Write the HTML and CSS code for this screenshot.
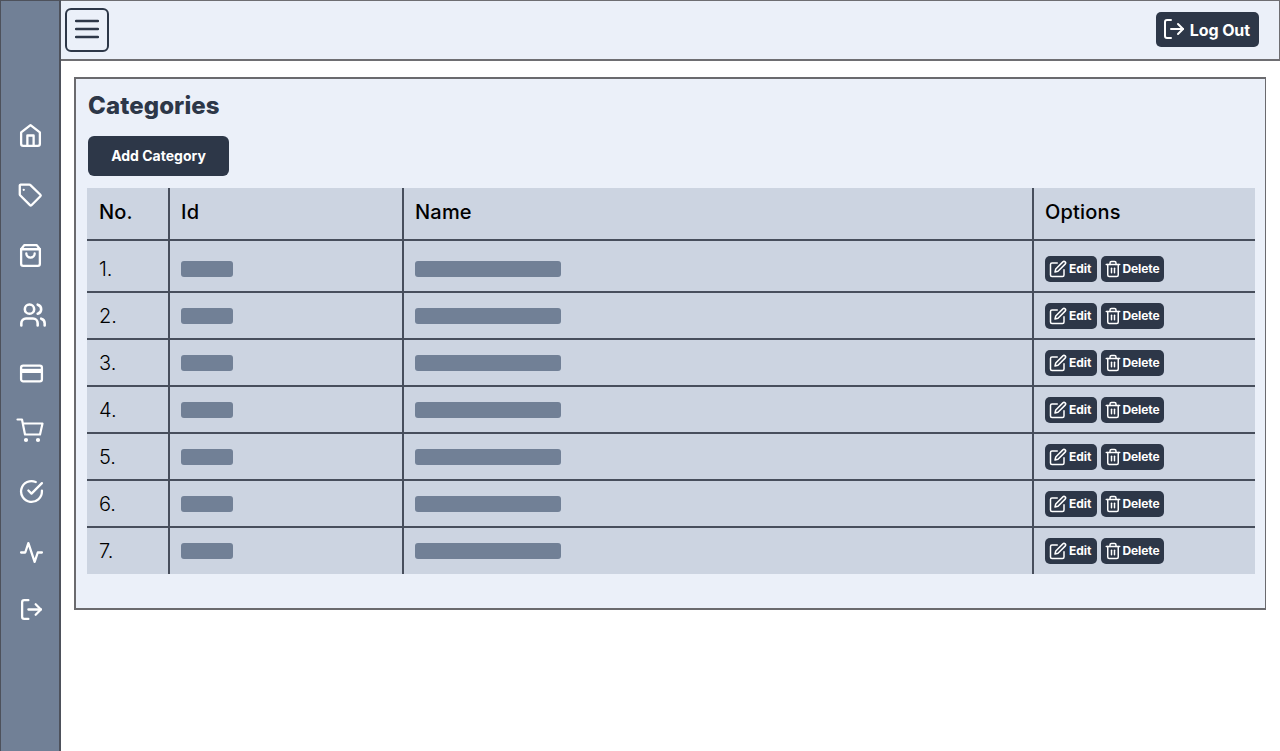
FILE: index.html
```html
<!DOCTYPE html>
<html lang="en">
<head>
    <meta charset="UTF-8">
    <meta name="viewport" content="width=device-width, initial-scale=1.0">
    <title>Categories</title>
    <link rel="stylesheet" href="styles.css">
</head>
<body>
    <svg class="defs" aria-hidden="true">
        <symbol id="i-home" viewBox="0 0 24 24"><path d="m3 9 9-7 9 7v11a2 2 0 0 1-2 2H5a2 2 0 0 1-2-2z"/><polyline points="9 22 9 12 15 12 15 22"/></symbol>
        <symbol id="i-tag" viewBox="0 0 24 24"><path d="M2.5 1.5h8.5a1 1 0 0 1 .7.3l9.8 9.5a1 1 0 0 1 0 1.4l-8.6 8.6a1 1 0 0 1-1.4 0L2 11.7a1 1 0 0 1-.3-.7V2.5a1 1 0 0 1 1-1z"/><path d="M5.5 6.5h.01"/></symbol>
        <symbol id="i-bag" viewBox="0 0 24 24"><path d="M6 2 3 6v14a2 2 0 0 0 2 2h14a2 2 0 0 0 2-2V6l-3-4Z"/><path d="M3 6h18"/><path d="M16 10a4 4 0 0 1-8 0"/></symbol>
        <symbol id="i-users" viewBox="0 0 24 24"><path d="M16 21v-2a4 4 0 0 0-4-4H6a4 4 0 0 0-4 4v2"/><circle cx="9" cy="7" r="4"/><path d="M22 21v-2a4 4 0 0 0-3-3.87"/><path d="M16 3.13a4 4 0 0 1 0 7.75"/></symbol>
        <symbol id="i-card" viewBox="0 0 24 24"><rect x="2" y="4.5" width="20" height="15" rx="2"/><path d="M2 9.5h20" stroke-width="4" stroke-linecap="butt"/></symbol>
        <symbol id="i-cart" viewBox="0 0 28 28"><circle class="dot" cx="10" cy="23" r="1"/><circle class="dot" cx="22" cy="23" r="1"/><path d="M1.5 2.5H6L9 17.5H24L26.5 6.5H7"/></symbol>
        <symbol id="i-check" viewBox="0 0 24 24"><path d="M22 11.08V12a10 10 0 1 1-5.93-9.14"/><polyline points="22 4 12 14.01 9 11.01"/></symbol>
        <symbol id="i-activity" viewBox="0 0 24 24"><path d="M22 12h-4l-3 9L9 3l-3 9H2"/></symbol>
        <symbol id="i-logout" viewBox="0 0 24 24"><path d="M9 21H5a2 2 0 0 1-2-2V5a2 2 0 0 1 2-2h4"/><polyline points="16 17 21 12 16 7"/><line x1="21" y1="12" x2="9" y2="12"/></symbol>
        <symbol id="i-edit" viewBox="0 0 24 24"><path d="M11 4H4a2 2 0 0 0-2 2v14a2 2 0 0 0 2 2h14a2 2 0 0 0 2-2v-7"/><path d="M18.5 2.5a2.121 2.121 0 0 1 3 3L12 15l-4 1 1-4 9.5-9.5z"/></symbol>
        <symbol id="i-trash" viewBox="0 0 24 24"><path d="M3 6h18"/><path d="M19 6v14a2 2 0 0 1-2 2H7a2 2 0 0 1-2-2V6m3 0V4a2 2 0 0 1 2-2h4a2 2 0 0 1 2 2v2"/><line x1="10" y1="11" x2="10" y2="17"/><line x1="14" y1="11" x2="14" y2="17"/></symbol>
    </svg>

    <div class="layout">
        <nav class="sidebar">
            <a class="nav-link"><svg class="nav-icon"><use href="#i-home"/></svg></a>
            <a class="nav-link"><svg class="nav-icon"><use href="#i-tag"/></svg></a>
            <a class="nav-link"><svg class="nav-icon"><use href="#i-bag"/></svg></a>
            <a class="nav-link shift-more"><svg class="nav-icon wide"><use href="#i-users"/></svg></a>
            <a class="nav-link short shift"><svg class="nav-icon"><use href="#i-card"/></svg></a>
            <a class="nav-link shift-left"><svg class="nav-icon wide"><use href="#i-cart"/></svg></a>
            <a class="nav-link shift"><svg class="nav-icon"><use href="#i-check"/></svg></a>
            <a class="nav-link tall shift"><svg class="nav-icon"><use href="#i-activity"/></svg></a>
            <a class="nav-link low shift"><svg class="nav-icon"><use href="#i-logout"/></svg></a>
        </nav>

        <div class="main">
            <header class="topbar">
                <button class="menu-btn">
                    <svg viewBox="0 0 24 24" class="menu-icon"><path d="M1 3h22M1 11h22M1 19h22"/></svg>
                </button>
                <button class="logout-btn"><svg class="logout-icon"><use href="#i-logout"/></svg>Log Out</button>
            </header>

            <section class="card">
                <h1>Categories</h1>
                <button class="add-btn">Add Category</button>
                <table>
                    <thead>
                        <tr><th class="col-no">No.</th><th class="col-id">Id</th><th>Name</th><th class="col-options">Options</th></tr>
                    </thead>
                    <tbody>
                        <tr><td>1.</td><td><div class="ph ph-id"></div></td><td><div class="ph ph-name"></div></td><td><div class="options"><button class="action action-edit"><svg><use href="#i-edit"/></svg>Edit</button><button class="action action-delete"><svg><use href="#i-trash"/></svg>Delete</button></div></td></tr>
                        <tr><td>2.</td><td><div class="ph ph-id"></div></td><td><div class="ph ph-name"></div></td><td><div class="options"><button class="action action-edit"><svg><use href="#i-edit"/></svg>Edit</button><button class="action action-delete"><svg><use href="#i-trash"/></svg>Delete</button></div></td></tr>
                        <tr><td>3.</td><td><div class="ph ph-id"></div></td><td><div class="ph ph-name"></div></td><td><div class="options"><button class="action action-edit"><svg><use href="#i-edit"/></svg>Edit</button><button class="action action-delete"><svg><use href="#i-trash"/></svg>Delete</button></div></td></tr>
                        <tr><td>4.</td><td><div class="ph ph-id"></div></td><td><div class="ph ph-name"></div></td><td><div class="options"><button class="action action-edit"><svg><use href="#i-edit"/></svg>Edit</button><button class="action action-delete"><svg><use href="#i-trash"/></svg>Delete</button></div></td></tr>
                        <tr><td>5.</td><td><div class="ph ph-id"></div></td><td><div class="ph ph-name"></div></td><td><div class="options"><button class="action action-edit"><svg><use href="#i-edit"/></svg>Edit</button><button class="action action-delete"><svg><use href="#i-trash"/></svg>Delete</button></div></td></tr>
                        <tr><td>6.</td><td><div class="ph ph-id"></div></td><td><div class="ph ph-name"></div></td><td><div class="options"><button class="action action-edit"><svg><use href="#i-edit"/></svg>Edit</button><button class="action action-delete"><svg><use href="#i-trash"/></svg>Delete</button></div></td></tr>
                        <tr><td>7.</td><td><div class="ph ph-id"></div></td><td><div class="ph ph-name"></div></td><td><div class="options"><button class="action action-edit"><svg><use href="#i-edit"/></svg>Edit</button><button class="action action-delete"><svg><use href="#i-trash"/></svg>Delete</button></div></td></tr>
                    </tbody>
                </table>
            </section>
        </div>
    </div>
</body>
</html>
```

FILE: styles.css
```css
* {
    box-sizing: border-box;
}
body {
    margin: 0;
    font-family: Inter, "Liberation Sans", sans-serif;
    background-color: #fff;
    overflow: hidden;
}
svg {
    fill: none;
    stroke: currentColor;
    stroke-width: 2;
    stroke-linecap: round;
    stroke-linejoin: round;
}
.defs {
    display: none;
}
.dot {
    fill: currentColor;
}
.layout {
    display: flex;
    height: 100vh;
}

/* sidebar */
.sidebar {
    width: 61px;
    flex-shrink: 0;
    padding: 104px 0 0 1px;
    display: flex;
    flex-direction: column;
    align-items: center;
    background-color: #718096;
    border: 1px solid #4d515b;
    border-width: 1px 2px 0 1px;
    color: #fff;
}
.nav-link {
    display: flex;
    align-items: center;
    justify-content: center;
    flex-shrink: 0;
    height: 60px;
    width: 100%;
}
.nav-link.short {
    height: 56px;
}
.nav-link.tall {
    height: 62px;
}
.nav-link.low {
    height: 52px;
}
.shift {
    padding-left: 2px;
}
.shift-more {
    padding-left: 4px;
}
.shift-left {
    padding-right: 1px;
}
.nav-icon {
    width: 25px;
    height: 25px;
    stroke-width: 2.2;
}
.nav-icon.wide {
    width: 28px;
    height: 28px;
}

/* top bar */
.main {
    flex: 1;
    min-width: 0;
}
.topbar {
    height: 61px;
    display: flex;
    justify-content: space-between;
    align-items: center;
    padding: 0 20px 0 4px;
    background-color: #ebf0f9;
    border: 1px solid #6e6e72;
    border-width: 1px 1px 2px 0;
}
.menu-btn {
    width: 44px;
    height: 44px;
    padding: 0;
    display: flex;
    align-items: center;
    justify-content: center;
    background: transparent;
    border: 2px solid #2d3748;
    border-radius: 6px;
    color: #2d3748;
}
.menu-icon {
    width: 24px;
    height: 24px;
    stroke-width: 2.5;
}
.logout-btn {
    display: flex;
    align-items: center;
    gap: 4px;
    height: 35px;
    margin-bottom: 2px;
    padding: 2px 9px 0 6px;
    background-color: #2d3748;
    color: #fff;
    border: none;
    border-radius: 5px;
    font-family: inherit;
    font-size: 16px;
    font-weight: 700;
    letter-spacing: -0.1px;
}
.logout-icon {
    width: 24px;
    height: 24px;
    margin-top: -2px;
}

/* card */
.card {
    margin: 16px 14px 0 13px;
    height: 533px;
    padding: 12px 10px 0 12px;
    background-color: #ebf0f9;
    border: 2px solid #6a6a6e;
    border-width: 2px 1px 2px 2px;
}
h1 {
    margin: 0 0 15px;
    font-size: 24px;
    line-height: 30px;
    font-weight: 800;
    letter-spacing: 0.1px;
    color: #2d3748;
}
.add-btn {
    display: block;
    width: 141px;
    height: 40px;
    padding: 0 0 2px;
    background-color: #2d3748;
    color: #fff;
    border: none;
    border-radius: 6px;
    font-family: inherit;
    font-size: 14px;
    font-weight: 700;
}

/* table */
table {
    width: 1168px;
    margin: 12px 0 0 -1px;
    border-collapse: collapse;
    table-layout: fixed;
    background-color: #ccd4e1;
    color: #000;
}
th, td {
    padding: 0 12px 0 11px;
    text-align: left;
    border-left: 2px solid #474e5c;
}
th:first-child, td:first-child {
    padding-left: 12px;
    border-left: none;
}
th {
    height: 52px;
    padding-bottom: 4px;
    font-size: 20px;
    font-weight: 500;
    letter-spacing: 0.2px;
    border-bottom: 2px solid #474e5c;
}
td {
    height: 47px;
    font-size: 20px;
    font-weight: 300;
    border-bottom: 2px solid #474e5c;
}
tbody tr:first-child td {
    height: 52px;
    padding-top: 5px;
}
tbody tr:last-child td {
    padding-bottom: 1px;
    border-bottom: none;
}
.col-no {
    width: 82px;
}
.col-id {
    width: 234px;
}
.col-options {
    width: 222px;
}
.ph {
    height: 16px;
    background-color: #718096;
    border-radius: 3px;
}
.ph-id {
    width: 52px;
}
.ph-name {
    width: 146px;
}
.options {
    display: flex;
    gap: 4px;
}
.action {
    display: flex;
    align-items: center;
    gap: 2px;
    height: 26px;
    padding: 0 4px;
    background-color: #2d3748;
    color: #fff;
    border: none;
    border-radius: 5px;
    font-family: inherit;
    font-size: 12px;
    font-weight: 700;
}
.action svg {
    width: 18px;
    height: 18px;
}
.action-edit {
    padding-right: 5px;
}
.action-delete {
    letter-spacing: -0.1px;
}
.action-delete svg {
    margin: 0 -1px;
}
```
